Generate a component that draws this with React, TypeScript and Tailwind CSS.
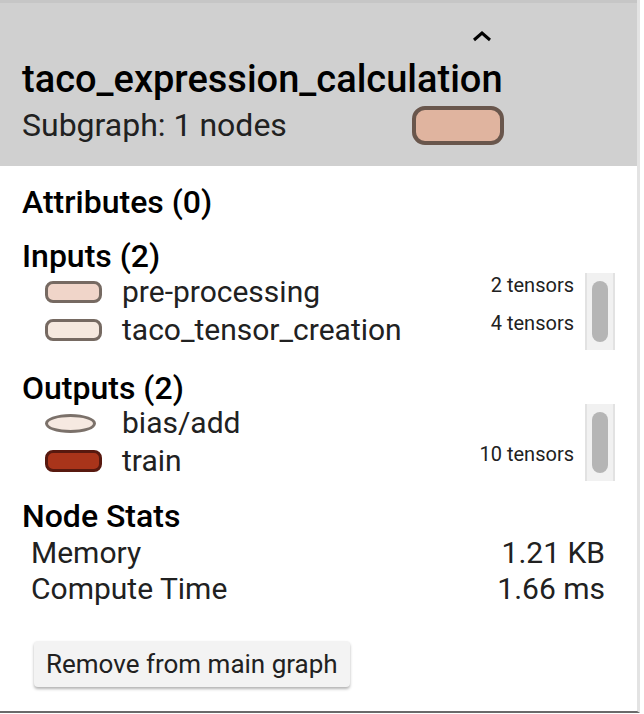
const inputs = [
  { name: "pre-processing", tensors: "2 tensors", fill: "bg-[#f0d5c9]", border: "border-[#766a62]", shape: "pill" },
  { name: "taco_tensor_creation", tensors: "4 tensors", fill: "bg-[#f6e9df]", border: "border-[#766a62]", shape: "pill" },
];

const outputs = [
  { name: "bias/add", tensors: "", fill: "bg-[#f6e9e1]", border: "border-[#7b716a]", shape: "ellipse" },
  { name: "train", tensors: "10 tensors", fill: "bg-[#a9341a]", border: "border-[#58190f]", shape: "pill" },
];

type Row = { name: string; tensors: string; fill: string; border: string; shape: string };

const Swatch = ({ row }: { row: Row }) =>
  row.shape === "ellipse" ? (
    <div className={`w-[51px] h-[19px] rounded-[50%] border-[3px] ${row.fill} ${row.border}`} />
  ) : (
    <div className={`w-[57px] h-[22px] rounded-[8px] border-[3px] ${row.fill} ${row.border}`} />
  );

const FakeScrollbar = () => (
  <div className="w-[30px] h-[77px] bg-[#f1f1f1] border-x-2 border-[#e2e2e2] flex justify-center pt-[8px]">
    <div className="w-[16px] h-[61px] rounded-full bg-[#b5b5b5]" />
  </div>
);

const NodeList = ({ rows }: { rows: Row[] }) => (
  <div className="flex">
    <div className="flex-1">
      {rows.map((row, idx) => (
        <div key={idx + "row"} className="h-[38px] flex">
          <div className="flex items-center pl-[23px] w-[100px]">
            <Swatch row={row} />
          </div>
          <div className="flex-1 flex items-center text-[30px] text-[#212121] leading-[38px] whitespace-nowrap">
            {row.name}
          </div>
          <div className="text-[20px] leading-[24px] text-[#212121] pr-[11px] whitespace-nowrap">{row.tensors}</div>
        </div>
      ))}
    </div>
    <FakeScrollbar />
  </div>
);

const App: React.FC = (): JSX.Element => {
  return (
    <div className="w-[640px] h-[713px] bg-white border-r-[3px] border-[#e3e3e3] border-b-2 border-b-[#6a6a6a] font-['Roboto',sans-serif]">
      <div className="h-[166px] bg-[#d0d0d0] border-t-[3px] border-[#c6c6c6] pl-[22px]">
        <div className="ml-[450px] pt-[27px] h-[44px]">
          <svg width="20" height="12" viewBox="0 0 20 12">
            <polyline points="2,10 10,3 18,10" fill="none" stroke="#000" strokeWidth="3" />
          </svg>
        </div>
        <div className="text-[38px] leading-[44px] font-medium text-black mt-[10px] whitespace-nowrap">
          taco_expression_calculation
        </div>
        <div className="flex items-center mt-[2px] h-[44px]">
          <div className="text-[32px] leading-[44px] text-[#212121] w-[390px]">Subgraph: 1 nodes</div>
          <div className="w-[92px] h-[39px] rounded-[13px] border-4 border-[#69564c] bg-[#e0b49f]" />
        </div>
      </div>

      <div className="pl-[22px] pr-[22px]">
        <div className="mt-[20px] text-[32px] leading-[32px] font-medium text-black">Attributes (0)</div>

        <div className="mt-[22px] text-[32px] leading-[32px] font-medium text-black">Inputs (2)</div>
        <div className="mt-[1px]">
          <NodeList rows={inputs} />
        </div>

        <div className="mt-[22px] text-[32px] leading-[32px] font-medium text-black">Outputs (2)</div>
        <NodeList rows={outputs} />

        <div className="mt-[19px] text-[32px] leading-[32px] font-medium text-black">Node Stats</div>
        <div className="mt-[3px] pl-[9px] pr-[10px] text-[30px] leading-[36px] text-[#212121]">
          <div className="flex justify-between">
            <div>Memory</div>
            <div>1.21 KB</div>
          </div>
          <div className="flex justify-between">
            <div>Compute Time</div>
            <div>1.66 ms</div>
          </div>
        </div>

        <button className="mt-[34px] ml-[12px] h-[46px] px-[12px] rounded-[4px] bg-[#f3f3f3] text-[26px] text-[#212121] shadow-[0_2px_3px_rgba(0,0,0,0.3)] whitespace-nowrap">
          Remove from main graph
        </button>
      </div>
    </div>
  );
};

export default App;
